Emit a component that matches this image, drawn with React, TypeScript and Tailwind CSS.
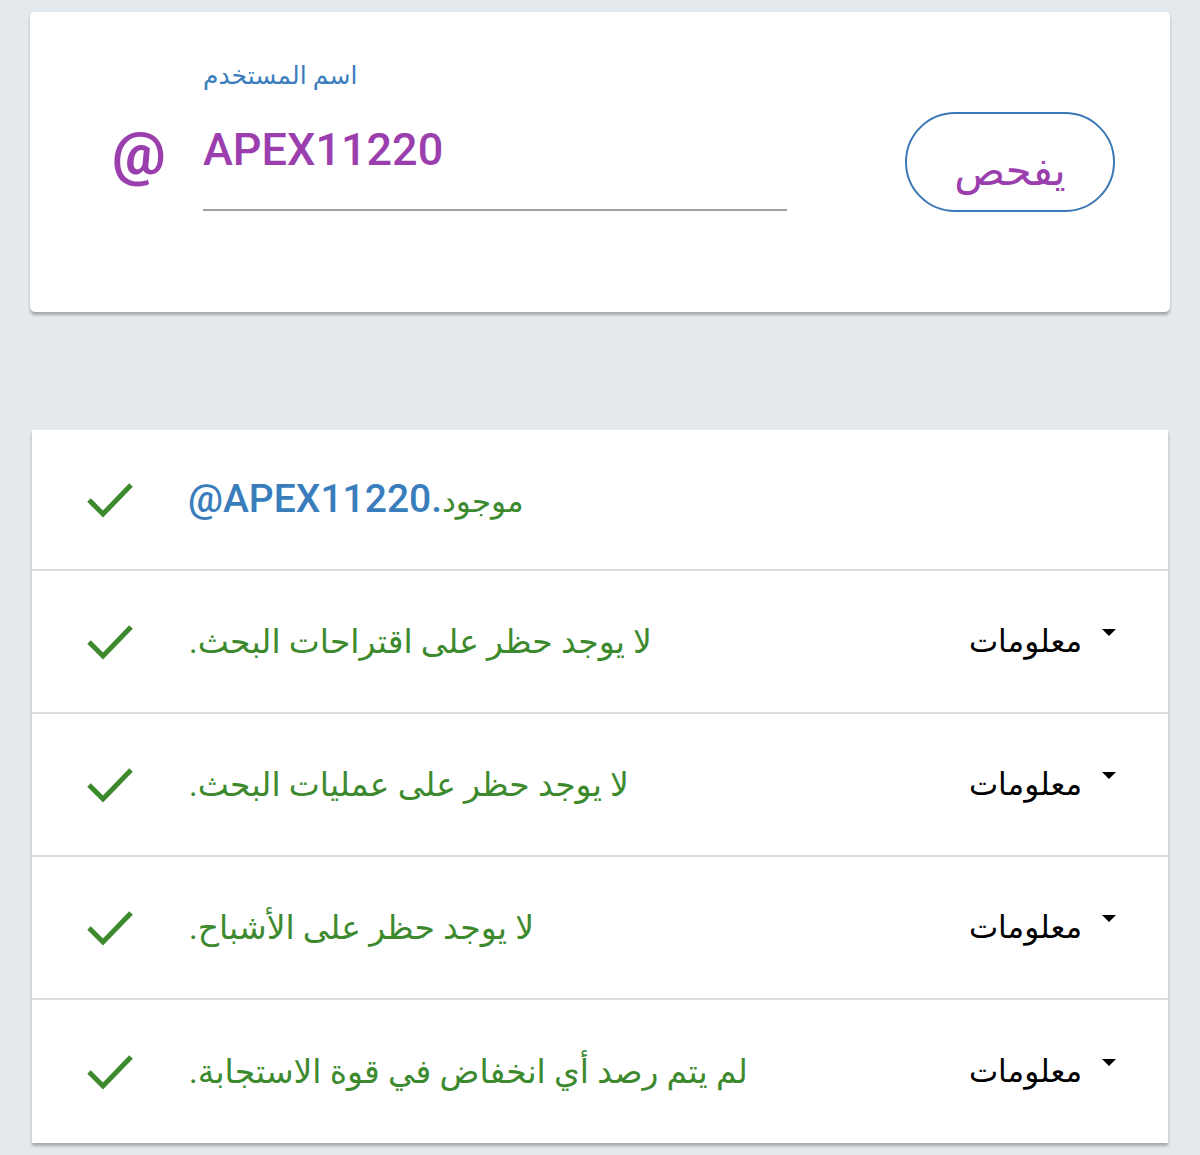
import React from "react";

const FONT = 'Roboto, "DejaVu Sans", "Noto Sans", sans-serif';

function Check() {
  return (
    <svg width="48" height="38" viewBox="0 0 48 38" className="shrink-0 -ml-[2px]">
      <polyline
        points="3,19 17,33 45,4"
        fill="none"
        stroke="#3d8a2e"
        strokeWidth="5"
        strokeLinecap="butt"
        strokeLinejoin="miter"
      />
    </svg>
  );
}

function Info() {
  return (
    <div className="flex items-center">
      <span dir="rtl" className="text-[31px] leading-none text-black">
        معلومات
      </span>
      <span className="ml-[20px] -mt-[18px] w-0 h-0 border-l-[7px] border-r-[7px] border-t-[7px] border-l-transparent border-r-transparent border-t-black" />
    </div>
  );
}

function Row({ text, last }: { text: string; last?: boolean }) {
  return (
    <div
      className={`h-[143px] flex items-center pl-[56px] pr-[52px] ${
        last ? "" : "border-b-2 border-[#dcdcdc]"
      }`}
    >
      <Check />
      <span dir="rtl" className="ml-[55px] text-[33px] leading-none text-[#3d8a2e]">
        {text}
      </span>
      <div className="flex-1" />
      <Info />
    </div>
  );
}

export default function App() {
  return (
    <div className="min-h-[1155px] bg-[#e4e9ed] pt-[12px] pb-[12px]" style={{ fontFamily: FONT }}>
      <div className="mx-[30px] h-[300px] bg-white rounded-[5px] shadow-[0_3px_3px_rgba(0,0,0,0.28)] flex items-start pl-[82px] pr-[55px] pt-[48px]">
        <div className="w-[91px] mt-[64px] text-[60px] leading-none font-bold text-[#9b3fae]">@</div>
        <div className="w-[584px] flex flex-col">
          <div dir="rtl" className="self-start text-[25px] leading-[32px] text-[#3a7dbd]">
            اسم المستخدم
          </div>
          <div className="mt-[30px] text-[45px] leading-[56px] font-medium text-[#9b3fae]">
            APEX11220
          </div>
          <div className="mt-[31px] h-[2px] bg-[#a0a0a0]" />
        </div>
        <div className="flex-1" />
        <button className="mt-[52px] w-[210px] h-[100px] rounded-full border-2 border-[#3b78b6] flex items-center justify-center pt-[16px] text-[42px] font-medium text-[#9b3fae] bg-white">
          <span dir="rtl">يفحص</span>
        </button>
      </div>

      <div className="mx-[32px] mt-[118px] bg-white shadow-[0_3px_3px_rgba(0,0,0,0.28)]">
        <div className="h-[141px] flex items-center pl-[56px] pr-[52px] border-b-2 border-[#dcdcdc]">
          <Check />
          <div className="ml-[54px] flex items-baseline">
            <span className="text-[39px] leading-none font-medium text-[#3a7dbd]">@APEX11220.</span>
            <span dir="rtl" className="text-[31px] leading-none text-[#3d8a2e]">موجود</span>
          </div>
        </div>
        <Row text="لا يوجد حظر على اقتراحات البحث." />
        <Row text="لا يوجد حظر على عمليات البحث." />
        <Row text="لا يوجد حظر على الأشباح." />
        <Row text="لم يتم رصد أي انخفاض في قوة الاستجابة." last />
      </div>
    </div>
  );
}
